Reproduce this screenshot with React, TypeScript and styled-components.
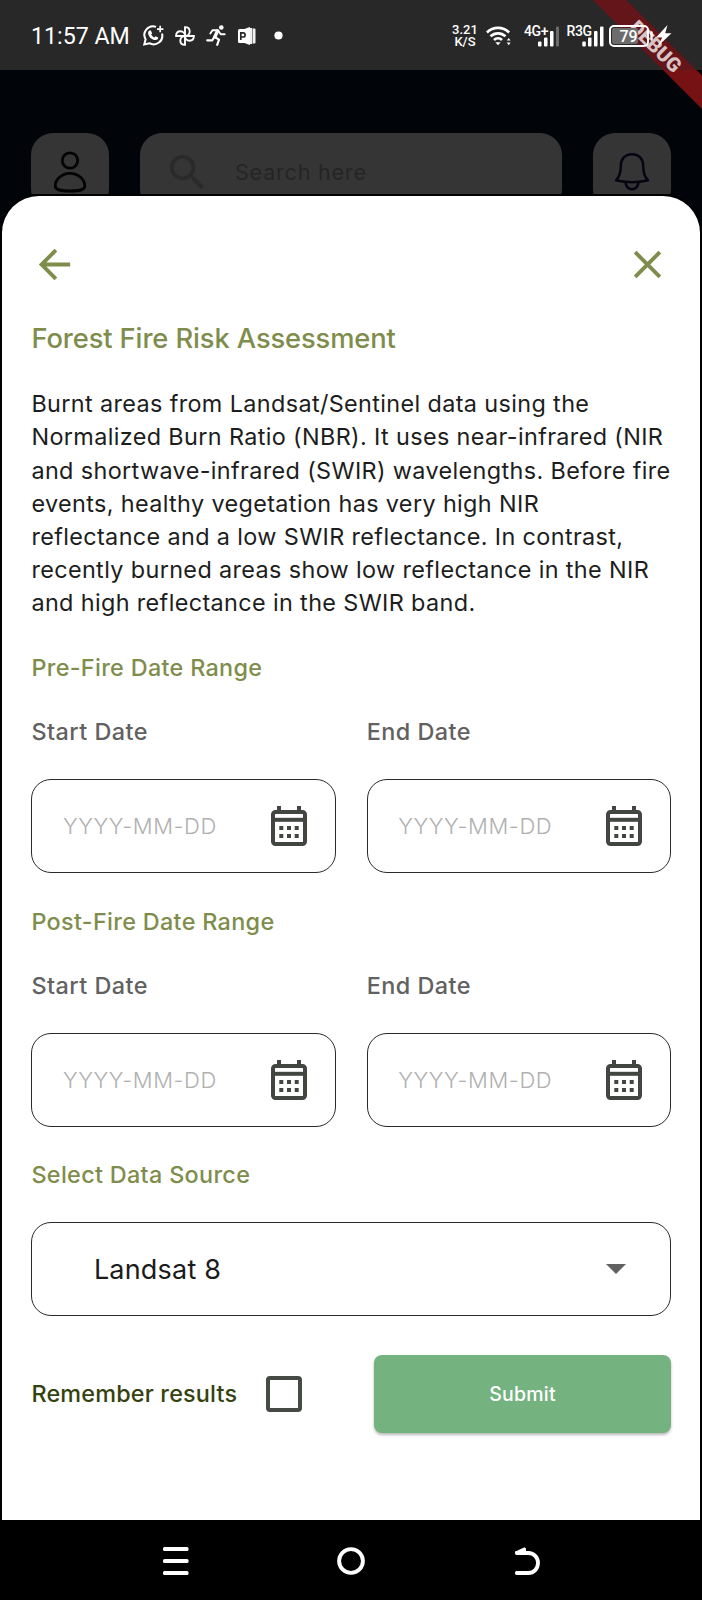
import React from "react";
import styled, { createGlobalStyle } from "styled-components";
import { MdArrowBack, MdClose, MdSearch } from "react-icons/md";

const GlobalStyle = createGlobalStyle`
  *, *::before, *::after { box-sizing: border-box; }
  body { margin: 0; background: #000; font-family: Inter, "Liberation Sans", sans-serif; }
  h1, h2, p { margin: 0; }
`;

const Screen = styled.div`
  position: relative;
  width: 702px;
  height: 1600px;
  display: flex;
  flex-direction: column;
  overflow: hidden;
  background: #010408;
`;

const StatusBar = styled.header`
  flex: none;
  height: 70px;
  padding: 1px 30px 0 31px;
  display: flex;
  justify-content: space-between;
  align-items: center;
  background: #282828;
  color: #fff;
  font-family: Roboto, "Liberation Sans", sans-serif;
`;

const StatusGroup = styled.div`
  position: relative;
  z-index: 1;
  display: flex;
  align-items: center;
  height: 24px;
`;

const Clock = styled.span`
  width: 112px;
  font-size: 23.2px;
  line-height: 24px;
  white-space: nowrap;
`;

const StatusIcon = styled.svg<{ $gap?: number }>`
  flex: none;
  display: block;
  margin-left: ${(p) => p.$gap ?? 0}px;
`;

const Speed = styled.div`
  width: 26px;
  font-size: 13px;
  font-weight: 500;
  line-height: 12px;
  text-align: center;
`;

const SignalText = styled.text`
  font-family: Roboto, "Liberation Sans", sans-serif;
  font-weight: 500;
  font-size: 14px;
  letter-spacing: -0.4px;
`;

const BatteryText = styled.text`
  font-family: Roboto, "Liberation Sans", sans-serif;
  font-weight: 500;
  font-size: 16px;
`;

const Backdrop = styled.div`
  flex: none;
  height: 124px;
  padding: 63px 31px 0;
  display: flex;
  align-items: flex-start;
  gap: 31px;
  overflow: hidden;
`;

const Tile = styled.div<{ $grow?: boolean }>`
  flex: ${(p) => (p.$grow ? "1" : "0 0 78px")};
  height: 78px;
  display: flex;
  align-items: center;
  justify-content: ${(p) => (p.$grow ? "flex-start" : "center")};
  padding-left: ${(p) => (p.$grow ? "24px" : "0")};
  border-radius: 22px;
  background: #353535;
`;

const SearchIcon = styled(MdSearch)`
  flex: none;
  color: #2a2a2a;
`;

const SearchText = styled.span`
  margin-left: 24px;
  font-size: 21.5px;
  letter-spacing: 0.8px;
  color: #252525;
`;

const Sheet = styled.main`
  flex: none;
  height: 1326px;
  padding: 44px 29px 0 29.4px;
  display: flex;
  flex-direction: column;
  background: #fff;
  border: 2px solid #000;
  border-bottom: 0;
  border-radius: 39px 39px 0 0;
`;

const SheetBar = styled.div`
  display: flex;
  justify-content: space-between;
  height: 48px;
  color: #7f8d4c;
`;

const IconButton = styled.button`
  width: 47px;
  height: 48px;
  padding: 0;
  border: 0;
  background: none;
  color: inherit;
  display: flex;
  align-items: center;
  justify-content: center;
`;

const Title = styled.h1`
  margin-top: 34px;
  font-size: 27.3px;
  line-height: 33px;
  font-weight: 500;
  letter-spacing: -0.1px;
  color: #7f8d4c;
`;

const Description = styled.p`
  margin-top: 32.3px;
  font-size: 23.4px;
  line-height: 33.15px;
  letter-spacing: 0.37px;
  white-space: pre;
  color: #1d1d1d;
`;

const SectionTitle = styled.h2`
  margin-top: 34.5px;
  font-size: 23.4px;
  line-height: 28px;
  font-weight: 500;
  letter-spacing: 0.32px;
  color: #7f8d4c;
`;

const DateRow = styled.div`
  margin-top: 36.3px;
  display: grid;
  grid-template-columns: 1fr 1fr;
  column-gap: 31px;
`;

const DateColumn = styled.label`
  display: flex;
  flex-direction: column;
`;

const DateLabel = styled.span`
  font-size: 23.4px;
  line-height: 28px;
  font-weight: 500;
  letter-spacing: 0.48px;
  color: #616161;
`;

const Field = styled.div<{ $top: number; $inset: number }>`
  margin-top: ${(p) => p.$top}px;
  height: 94px;
  padding: 0 28px 0 ${(p) => p.$inset}px;
  display: flex;
  align-items: center;
  justify-content: space-between;
  border: 1.4px solid #2a2a2a;
  border-radius: 20px;
`;

const Placeholder = styled.span`
  font-size: 22px;
  font-weight: 300;
  letter-spacing: 0.6px;
  color: #b0b0b0;
  white-space: nowrap;
`;

const SelectValue = styled.span`
  font-size: 27px;
  letter-spacing: 0.2px;
  color: #1b1b1b;
`;

const Footer = styled.div`
  margin-top: 39px;
  display: flex;
  align-items: center;
`;

const Remember = styled.span`
  width: 235px;
  font-size: 23.4px;
  line-height: 28px;
  font-weight: 500;
  letter-spacing: 0.18px;
  color: #35420f;
`;

const Checkbox = styled.span`
  width: 36px;
  height: 36px;
  border: 4px solid #454a45;
  border-radius: 4px;
`;

const Submit = styled.button`
  margin-left: auto;
  width: 297px;
  height: 78px;
  padding: 0;
  border: 0;
  border-radius: 8px;
  background: #74b27f;
  box-shadow: 0 2px 3px rgba(0, 0, 0, 0.28);
  color: #fff;
  font-family: inherit;
  font-size: 19.5px;
  font-weight: 500;
  letter-spacing: 0.2px;
`;

const NavBar = styled.nav`
  flex: none;
  height: 80px;
  display: flex;
  justify-content: center;
  align-items: center;
  gap: 147px;
  background: #000;
`;

const Ribbon = styled.svg`
  position: absolute;
  top: 0;
  right: 0;
`;

const RibbonText = styled.text`
  font-family: Roboto, "Liberation Sans", sans-serif;
  font-size: 19.9px;
  font-weight: 900;
`;

const CalendarIcon = () => (
  <svg width="36" height="40" viewBox="0 0 36 40" fill="none">
    <rect x="2" y="6" width="32" height="32" rx="2.500" stroke="#414641" strokeWidth="4" />
    <path d="M2 13.800H34" stroke="#414641" strokeWidth="4" />
    <path d="M8 0V6M28 0V6" stroke="#414641" strokeWidth="4" />
    <path d="M8.300 22h4M16 22h4M23.700 22h4M8.300 30h4M16 30h4M23.700 30h4" stroke="#414641" strokeWidth="4" />
  </svg>
);

const DateField = ({ label }: { label: string }) => (
  <DateColumn>
    <DateLabel>{label}</DateLabel>
    <Field $top={33} $inset={30.5}>
      <Placeholder>YYYY-MM-DD</Placeholder>
      <CalendarIcon />
    </Field>
  </DateColumn>
);

const DateRange = ({ title }: { title: string }) => (
  <>
    <SectionTitle>{title}</SectionTitle>
    <DateRow>
      <DateField label="Start Date" />
      <DateField label="End Date" />
    </DateRow>
  </>
);

const Status = () => (
  <StatusBar>
    <StatusGroup>
      <Clock>11:57 AM</Clock>
      <StatusIcon width="21" height="21" viewBox="0 0 21 21" fill="none" stroke="#fff" strokeWidth="2">
        <path d="M13 1.900A8.600 8.600 0 0 0 2.600 14.300L1.300 19.500l5.100-1.300A8.600 8.600 0 0 0 19 8.500" />
        <path d="M14 4.100h6.400M17.200 .8v6.500" strokeWidth="1.700" />
        <path d="M6.400 5.600l1.500-.1 1.200 2.700-.9 1.300c.8 1.500 1.800 2.400 3.200 3l1.200-1.200 2.600 1.300c0 1.800-1.200 2.500-2.600 2.500-3.600 0-7.500-3.700-7.500-7.200 0-1 .5-1.900 1.300-2.300z" fill="#fff" stroke="none" />
      </StatusIcon>
      <StatusIcon $gap={11} width="20" height="20" viewBox="0 0 20 20" fill="none" stroke="#fff" strokeWidth="1.900">
        <path d="M10 10V1.100C13 1.100 14.700 3 14.700 5.500S12.700 10 10 10z" />
        <path d="M10 10H18.900C18.900 13 17 14.700 14.500 14.700S10 12.700 10 10z" />
        <path d="M10 10V18.900C7 18.900 5.300 17 5.300 14.500S7.300 10 10 10z" />
        <path d="M10 10H1.100C1.100 7 3 5.300 5.500 5.300S10 7.300 10 10z" />
      </StatusIcon>
      <StatusIcon $gap={11} width="20" height="21" viewBox="0 0 20 21" fill="none" stroke="#fff" strokeLinecap="round" strokeLinejoin="round">
        <circle cx="15.300" cy="2.500" r="2.300" fill="#fff" stroke="none" />
        <path d="M4.300 8.500L6.500 5.300H12L14.700 9.300H18.700" strokeWidth="1.900" />
        <path d="M11.500 6L8.800 12" strokeWidth="3.400" />
        <path d="M8.600 11.800L13 14.700 11.200 19.800" strokeWidth="2.200" />
        <path d="M8 12.500L6.300 15.300H1.200" strokeWidth="2.200" />
      </StatusIcon>
      <StatusIcon $gap={12} width="18" height="18" viewBox="0 0 18 18">
        <path d="M7 1.800L12 0V18L7 16.200z" fill="#fff" />
        <rect x="0" y="2" width="9.500" height="14" rx="1.500" fill="#fff" />
        <path d="M12 1H14.200V17H12zM14.700 1.500H16.500a1 1 0 0 1 1 1V15.500a1 1 0 0 1-1 1H14.700z" fill="#f0f0f0" />
        <path d="M2.800 13V5.800H5a2.100 2.100 0 0 1 0 4.200H2.800" fill="none" stroke="#282828" strokeWidth="1.700" />
      </StatusIcon>
      <StatusIcon $gap={18} width="9" height="9" viewBox="0 0 9 9">
        <circle cx="4.500" cy="4.500" r="4.100" fill="#fff" />
      </StatusIcon>
    </StatusGroup>
    <StatusGroup>
      <Speed>
        3.21
        <br />
        K/S
      </Speed>
      <StatusIcon $gap={8} width="26" height="20" viewBox="0 0 26 20" fill="none" stroke="#fff" strokeWidth="2.700">
        <path d="M.9 6.400C7.200.4 16.800.4 23.100 6.400" />
        <path d="M4.500 10.300c4.300-4 10.700-4 15 0" />
        <path d="M8 14c2.300-2.200 5.700-2.200 8 0" />
        <path d="M9.300 16.300h5.400L12 19.300z" fill="#fff" stroke="none" />
        <path d="M20.800 14.600L22.700 12l1.900 2.600zM20.800 16.600L22.700 19.200l1.900-2.600z" fill="#fff" stroke="none" />
      </StatusIcon>
      <StatusIcon $gap={11} width="37" height="24" viewBox="0 0 37 24" fill="#fff">
        <SignalText x="1" y="11.700">4G+</SignalText>
        <rect x="15" y="17.500" width="3.500" height="5" rx="1" />
        <rect x="21" y="13.500" width="3.500" height="9" rx="1" />
        <rect x="27" y="7" width="3.500" height="15.500" rx="1" />
        <rect x="33" y="2.500" width="3" height="20" rx="1" fill="#6b6b6b" />
      </StatusIcon>
      <StatusIcon $gap={6} width="38" height="24" viewBox="0 0 38 24" fill="#fff">
        <SignalText x="0.500" y="11.700">R3G</SignalText>
        <rect x="16.300" y="17.500" width="3.500" height="5" rx="1" />
        <rect x="22" y="13.500" width="3.500" height="9" rx="1" />
        <rect x="28" y="7" width="3.500" height="15.500" rx="1" />
        <rect x="34" y="2.500" width="3.500" height="20" rx="1" />
      </StatusIcon>
      <StatusIcon $gap={5} width="63" height="24" viewBox="0 0 63 24" fill="none">
        <rect x="3" y="4" width="26" height="16" rx="2" fill="#6c6c6c" />
        <rect x="1" y="2" width="38" height="20" rx="4" stroke="#fff" strokeWidth="2" />
        <path d="M42.500 8.500V15.500" stroke="#fff" strokeWidth="2.400" strokeLinecap="round" />
        <BatteryText x="10.500" y="17.500" fill="#fff">79</BatteryText>
        <path d="M58.500 1L47 13.500h6.200L49 22 62.500 9.300H56.200z" fill="#fff" />
      </StatusIcon>
    </StatusGroup>
  </StatusBar>
);

const DebugRibbon = () => (
  <Ribbon width="112" height="112" viewBox="0 0 112 112">
    <path d="M3 0H36.500L106.500 70H73z" fill="#641519" />
    <path d="M73 70H106.500L112 75.500V109z" fill="#761213" />
    <RibbonText
      transform="translate(65.700 46.300) rotate(45)"
      y="7"
      textAnchor="middle"
      fill="#e3d6d6"
      fillOpacity=".92"
    >
      DEBUG
    </RibbonText>
  </Ribbon>
);

export default function App() {
  return (
    <>
      <GlobalStyle />
      <Screen>
        <Status />
        <Backdrop>
          <Tile>
            <svg width="34" height="42" viewBox="0 0 34 42" fill="none" stroke="#030306" strokeWidth="2.800">
              <circle cx="17" cy="9.500" r="7.700" />
              <path d="M17 22.300c-8.500 0-14.800 6.500-14.800 12.500 0 4.500 6 5.200 14.800 5.200s14.800-.7 14.800-5.200c0-6-6.300-12.500-14.800-12.500z" />
            </svg>
          </Tile>
          <Tile $grow>
            <SearchIcon size={47} />
            <SearchText>Search here</SearchText>
          </Tile>
          <Tile>
            <svg width="36" height="40" viewBox="0 0 36 40" fill="none" stroke="#060312" strokeWidth="2.500" strokeLinejoin="round">
              <path d="M18 2.200C10.500 2.200 6.800 7.500 6.800 14c0 7-1 10.500-4.800 14.300 10 2.500 22 2.500 32 0-3.800-3.800-4.800-7.300-4.800-14.300C29.200 7.500 25.500 2.200 18 2.200z" />
              <path d="M11.500 30c0 4 2.800 7.300 6.500 7.300s6.500-3.300 6.500-7.300" />
            </svg>
          </Tile>
        </Backdrop>
        <Sheet>
          <SheetBar>
            <IconButton aria-label="Back">
              <MdArrowBack size={47} />
            </IconButton>
            <IconButton aria-label="Close">
              <MdClose size={47} />
            </IconButton>
          </SheetBar>
          <Title>Forest Fire Risk Assessment</Title>
          <Description>
            {`Burnt areas from Landsat/Sentinel data using the
Normalized Burn Ratio (NBR). It uses near-infrared (NIR
and shortwave-infrared (SWIR) wavelengths. Before fire
events, healthy vegetation has very high NIR
reflectance and a low SWIR reflectance. In contrast,
recently burned areas show low reflectance in the NIR
and high reflectance in the SWIR band.`}
          </Description>
          <DateRange title="Pre-Fire Date Range" />
          <DateRange title="Post-Fire Date Range" />
          <SectionTitle>Select Data Source</SectionTitle>
          <Field $top={32.6} $inset={61.5}>
            <SelectValue>Landsat 8</SelectValue>
            <svg width="36" height="10" viewBox="0 0 36 10">
              <path d="M0 0H20L10 10z" fill="#616161" />
            </svg>
          </Field>
          <Footer>
            <Remember>Remember results</Remember>
            <Checkbox role="checkbox" aria-checked={false} />
            <Submit>Submit</Submit>
          </Footer>
        </Sheet>
        <NavBar>
          <svg width="28" height="30" viewBox="0 0 28 30" fill="#fff">
            <rect x="1" y="2" width="25.500" height="4" rx="1.500" />
            <rect x="1" y="14" width="25.500" height="4" rx="1.500" />
            <rect x="1" y="26" width="25.500" height="4" rx="1.500" />
          </svg>
          <svg width="28" height="30" viewBox="0 0 28 30" fill="none" stroke="#fff" strokeWidth="3.900">
            <circle cx="14" cy="16" r="11.900" />
          </svg>
          <svg width="28" height="30" viewBox="0 0 28 30" fill="none" stroke="#fff" strokeWidth="3.800" strokeLinecap="round">
            <path d="M4.800 8H16.500a9.500 10 0 0 1 0 20H4.800" />
            <path d="M3 6.800L12.500 2.200 14 3.400V8L4 8.500z" fill="#fff" stroke="none" />
          </svg>
        </NavBar>
        <DebugRibbon />
      </Screen>
    </>
  );
}
